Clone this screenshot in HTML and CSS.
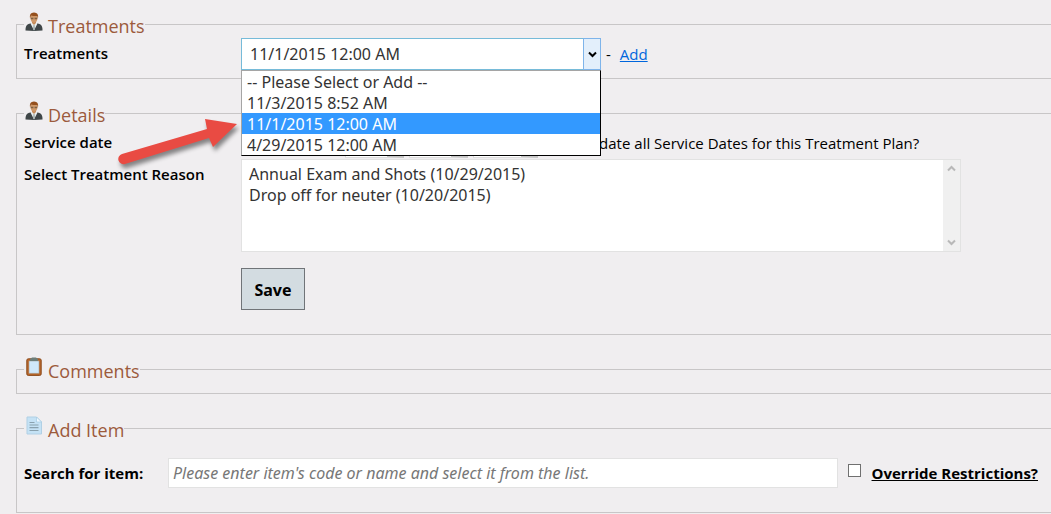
FILE: index.html
```html
<!DOCTYPE html>
<html lang="en">
<head>
    <meta charset="UTF-8">
    <meta name="viewport" content="width=device-width, initial-scale=1.0">
    <title>Treatments</title>
    <link rel="stylesheet" href="styles.css">
</head>
<body>
    <svg class="defs" aria-hidden="true">
        <symbol id="person" viewBox="0 0 18 19">
            <path d="M0.5 18.5 Q0.3 13.2 3.5 12 L7 11 H11 L14.5 12 Q17.7 13.2 17.5 18.5 Q9 19.3 0.5 18.5Z" fill="#3f4648"/>
            <path d="M5.5 11.5 L9 18.5 L12.5 11.5 L11 10 H7Z" fill="#e9eeee"/>
            <path d="M8.3 13 H9.7 L10 17 L9 18.5 L8 17Z" fill="#a9b3b1"/>
            <path d="M7 8.5 H11 V11 L9 13 L7 11Z" fill="#c58a58"/>
            <ellipse cx="9" cy="6" rx="3.6" ry="4.7" fill="#cf9868"/>
            <path d="M5 6.5 Q4 0.4 9 0.5 Q14 0.4 13 6.5 L12.2 4 Q9 4.2 6 3.4Z" fill="#944f1d"/>
            <path d="M5.7 5.8 H8.4 V7.2 H6Z M9.6 5.8 H12.3 L12 7.2 H9.6Z" fill="#7d6045"/>
        </symbol>
        <symbol id="clipboard" viewBox="0 0 18 19">
            <rect x="1.8" y="1.8" width="14.4" height="16.6" rx="1.5" fill="#b9662a" stroke="#8b4a1c"/>
            <rect x="4" y="4" width="10" height="12.2" fill="#cfe8fb" stroke="#a5a6a0" stroke-width="0.6"/>
            <path d="M5 2.2 L7 0.5 H11 L13 2.2 V4 H5Z" fill="#6d7d79"/>
        </symbol>
        <symbol id="page" viewBox="0 0 18 19">
            <path d="M2 1 H11.5 L16.5 6 V18 H2Z" fill="#c5e2f5" stroke="#b1d0e5"/>
            <path d="M11.5 1 V6 H16.5Z" fill="#eff9ff" stroke="#a5cae3" stroke-width="0.7"/>
            <path d="M4.5 6.5 H9.5 M4.5 9 H13.5 M4.5 11.7 H13.5 M4.5 14.5 H13.5" stroke="#8aa1ae" stroke-width="1.2"/>
        </symbol>
    </svg>

    <main class="page">
        <fieldset class="panel">
            <legend><svg class="icon"><use href="#person"/></svg>Treatments</legend>
            <div class="row">
                <label class="row-label" for="treatment">Treatments</label>
                <div class="combo">
                    <select id="treatment" class="combo-select">
                        <option>-- Please Select or Add --</option>
                        <option>11/3/2015 8:52 AM</option>
                        <option selected>11/1/2015 12:00 AM</option>
                        <option>4/29/2015 12:00 AM</option>
                    </select>
                    <span class="combo-arrow">
                        <svg width="9" height="7" viewBox="0 0 9 7"><path d="M1 1.5 L4.5 5 L8 1.5" fill="none" stroke="#000" stroke-width="2"/></svg>
                    </span>
                    <ul class="combo-list">
                        <li>-- Please Select or Add --</li>
                        <li>11/3/2015 8:52 AM</li>
                        <li class="active">11/1/2015 12:00 AM</li>
                        <li>4/29/2015 12:00 AM</li>
                    </ul>
                </div>
                <span class="dash">-</span>
                <a class="add-link" href="#">Add</a>
            </div>
        </fieldset>

        <fieldset class="panel details">
            <legend><svg class="icon"><use href="#person"/></svg>Details</legend>
            <div class="row">
                <span class="row-label">Service date</span>
                <div class="date-parts">
                    <select class="date-select" aria-label="Month"><option>11</option></select>
                    <select class="date-select" aria-label="Day"><option>1</option></select>
                    <select class="date-select year" aria-label="Year"><option>2015</option></select>
                </div>
                <label class="update-all"><input type="checkbox">Update all Service Dates for this Treatment Plan?</label>
            </div>
            <div class="row row-top">
                <label class="row-label" for="reason">Select Treatment Reason</label>
                <div class="listbox">
                    <select id="reason" class="listbox-select" size="4">
                        <option>Annual Exam and Shots (10/29/2015)</option>
                        <option>Drop off for neuter (10/20/2015)</option>
                    </select>
                    <div class="scrollbar">
                        <svg width="9" height="7" viewBox="0 0 9 7"><path d="M1 5.5 L4.5 2 L8 5.5" fill="none" stroke="#b8b8b8" stroke-width="2"/></svg>
                        <svg width="9" height="7" viewBox="0 0 9 7"><path d="M1 1.5 L4.5 5 L8 1.5" fill="none" stroke="#b8b8b8" stroke-width="2"/></svg>
                    </div>
                </div>
            </div>
            <div class="row actions">
                <button type="button" class="save-btn">Save</button>
            </div>
        </fieldset>

        <fieldset class="panel comments">
            <legend><svg class="icon"><use href="#clipboard"/></svg>Comments</legend>
        </fieldset>

        <fieldset class="panel add-item">
            <legend><svg class="icon"><use href="#page"/></svg>Add Item</legend>
            <div class="search-row">
                <label class="search-label" for="search">Search for item:</label>
                <input type="text" id="search" class="search-input" placeholder="Please enter item's code or name and select it from the list.">
                <input type="checkbox" id="override" class="check">
                <label class="override-label" for="override">Override Restrictions?</label>
            </div>
        </fieldset>

        <svg class="pointer" width="130" height="56" viewBox="0 0 130 56" aria-hidden="true">
            <path d="M12 40 L97 15 L95 5 L127 10 L103 33 L99 24 L15 50 A5 5 0 0 1 12 40Z" fill="#e94b43"/>
        </svg>
    </main>
</body>
</html>
```
FILE: styles.css
```css
* {
    box-sizing: border-box;
}
body {
    margin: 0;
    background-color: #f0eef0;
    color: #000;
    font-family: "Open Sans", "Noto Sans", sans-serif;
    font-size: 15px;
    overflow: hidden;
}
.defs {
    display: none;
}
/* panels run past the right edge of the window */
.page {
    position: relative;
    margin-right: -10px;
    padding: 10px 0 0 16px;
}
.panel {
    min-width: 0;
    margin: 0 0 20px;
    padding: 0 8px 8px 7px;
    border: 1px solid #c8c6c7;
}
.panel legend {
    display: flex;
    height: 28px;
    padding: 0;
    color: #9c5a3c;
    font-size: 18px;
    line-height: 32px;
}
.icon {
    width: 18px;
    height: 19px;
    margin: 2px 5px 0 1px;
}
.row {
    display: flex;
    align-items: center;
    height: 32px;
    line-height: 30px;
}
.row-label {
    flex: none;
    width: 217px;
    height: 32px;
    font-weight: 600;
}
.combo {
    position: relative;
    width: 360px;
    height: 32px;
}
.combo-select {
    display: block;
    width: 100%;
    height: 32px;
    padding: 0 8px;
    border: 1px solid #76bbd9;
    border-radius: 0;
    background-color: #fff;
    color: #333;
    font-family: "Noto Sans", sans-serif;
    font-size: 16px;
    appearance: none;
}
.combo-arrow {
    position: absolute;
    top: 0;
    right: 0;
    bottom: 0;
    display: flex;
    align-items: center;
    justify-content: center;
    width: 18px;
    border: 1px solid #7eb4ea;
    background-color: #e3effb;
    pointer-events: none;
}
.combo-list {
    position: absolute;
    z-index: 2;
    top: 32px;
    left: 0;
    width: 100%;
    margin: 0;
    padding: 0;
    border: 1px solid #000;
    border-top-color: #a5a5a5;
    border-left-color: #a5a5a5;
    background-color: #fff;
    color: #333;
    font-family: "Noto Sans", sans-serif;
    font-size: 16px;
    line-height: 19px;
    list-style: none;
}
.combo-list li {
    padding: 2px 0 0 5px;
}
.combo-list .active {
    background-color: #3399ff;
    color: #fff;
}
.dash {
    margin: 0 9px 0 5px;
}
.add-link {
    color: #0066dd;
}
.date-parts {
    display: flex;
    gap: 5px;
    padding-left: 104px;
}
.date-select {
    width: 59px;
    height: 30px;
    border: 1px solid #ddd;
    border-right: 17px solid #c6c6c6;
    background-color: #fff;
    appearance: none;
}
.date-select.year {
    width: 65px;
}
.update-all {
    display: flex;
    align-items: center;
    height: 32px;
}
.update-all input {
    width: 13px;
    height: 13px;
    margin: 0 10px 0 18px;
}
.row-top {
    align-items: flex-start;
    height: 93px;
}
.listbox {
    display: flex;
    width: 720px;
    height: 93px;
    border: 1px solid #e2e2e2;
    background-color: #fff;
}
.listbox-select {
    flex: 1;
    min-width: 0;
    padding: 3px 5px;
    border: 0;
    background-color: #fff;
    color: #333;
    font-family: "Noto Sans", sans-serif;
    font-size: 16px;
    overflow: hidden;
}
.listbox-select option {
    height: 21px;
    padding: 0 2px;
    line-height: 21px;
}
.scrollbar {
    display: flex;
    flex-direction: column;
    align-items: center;
    justify-content: space-between;
    width: 17px;
    padding: 5px 0;
    background-color: #f0f0f0;
}
.actions {
    height: 58px;
    padding: 16px 0 0 217px;
}
.save-btn {
    width: 64px;
    height: 42px;
    padding: 2px 0 0;
    border: 1px solid #707478;
    border-radius: 0;
    background-color: #d3dce1;
    color: #000;
    font-family: "Noto Sans", sans-serif;
    font-size: 16px;
    font-weight: 700;
}
.details {
    padding-bottom: 24px;
}
.comments {
    padding-bottom: 10px;
}
.add-item {
    padding: 0 22px 24px 7px;
}
.search-row {
    display: flex;
    align-items: center;
    padding-top: 16px;
    font-weight: 700;
}
.search-label {
    width: 144px;
}
.search-input {
    flex: 1;
    min-width: 0;
    height: 30px;
    padding: 0 4px;
    border: 1px solid #e2e2e2;
    background-color: #fff;
    font-family: "Noto Sans", sans-serif;
    font-size: 16px;
}
.search-input::placeholder {
    color: #777;
    font-style: italic;
}
.check {
    width: 13px;
    height: 13px;
    margin: 0 11px 5px 10px;
    border: 1px solid #707070;
    background-color: #fff;
    appearance: none;
}
.override-label {
    text-decoration: underline;
}
.pointer {
    position: absolute;
    z-index: 3;
    top: 114px;
    left: 110px;
    filter: drop-shadow(2px 4px 2px rgba(0, 0, 0, 0.45));
}
```
